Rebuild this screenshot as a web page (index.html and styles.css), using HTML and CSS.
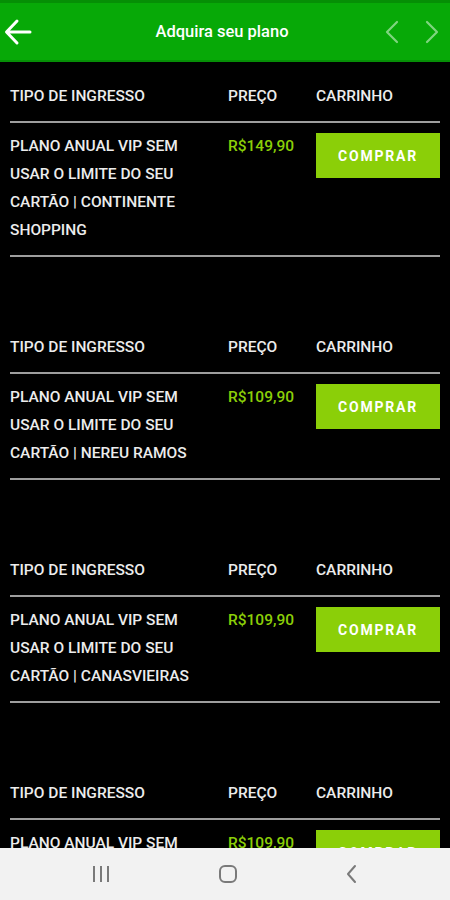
FILE: index.html
```html
<!DOCTYPE html>
<html lang="pt-BR">

<head>
    <meta charset="UTF-8">
    <meta name="viewport" content="width=device-width, initial-scale=1.0">
    <title>Adquira seu plano</title>
    <link rel="stylesheet" href="styles.css">
</head>

<body>
    <div class="app">
        <header class="app__bar">
            <button class="app__back" aria-label="Voltar">
                <svg width="28" height="28" viewBox="0 0 28 28" fill="none" stroke="#fff" stroke-width="3" stroke-linecap="round" stroke-linejoin="round">
                    <path d="M26 14H3M13 3L2.5 14L13 25"/>
                </svg>
            </button>
            <h1 class="app__title">Adquira seu plano</h1>
            <div class="app__nav">
                <svg width="16" height="24" viewBox="0 0 16 24" fill="none" stroke="#7fd57f" stroke-width="2.2" stroke-linecap="round" stroke-linejoin="round">
                    <path d="M13 2L3 12L13 22"/>
                </svg>
                <svg width="16" height="24" viewBox="0 0 16 24" fill="none" stroke="#7fd57f" stroke-width="2.2" stroke-linecap="round" stroke-linejoin="round">
                    <path d="M3 2L13 12L3 22"/>
                </svg>
            </div>
        </header>

        <main class="plans">
            <div class="plan">
                <div class="plan__head">
                    <span>TIPO DE INGRESSO</span>
                    <span>PREÇO</span>
                    <span>CARRINHO</span>
                </div>
                <div class="plan__row">
                    <span class="plan__name">PLANO ANUAL VIP SEM USAR O LIMITE DO SEU CARTÃO | CONTINENTE SHOPPING</span>
                    <span class="plan__price">R$149,90</span>
                    <button class="plan__buy">COMPRAR</button>
                </div>
            </div>

            <div class="plan">
                <div class="plan__head">
                    <span>TIPO DE INGRESSO</span>
                    <span>PREÇO</span>
                    <span>CARRINHO</span>
                </div>
                <div class="plan__row">
                    <span class="plan__name">PLANO ANUAL VIP SEM USAR O LIMITE DO SEU CARTÃO | NEREU RAMOS</span>
                    <span class="plan__price">R$109,90</span>
                    <button class="plan__buy">COMPRAR</button>
                </div>
            </div>

            <div class="plan">
                <div class="plan__head">
                    <span>TIPO DE INGRESSO</span>
                    <span>PREÇO</span>
                    <span>CARRINHO</span>
                </div>
                <div class="plan__row">
                    <span class="plan__name">PLANO ANUAL VIP SEM USAR O LIMITE DO SEU CARTÃO | CANASVIEIRAS</span>
                    <span class="plan__price">R$109,90</span>
                    <button class="plan__buy">COMPRAR</button>
                </div>
            </div>

            <div class="plan">
                <div class="plan__head">
                    <span>TIPO DE INGRESSO</span>
                    <span>PREÇO</span>
                    <span>CARRINHO</span>
                </div>
                <div class="plan__row">
                    <span class="plan__name">PLANO ANUAL VIP SEM USAR O LIMITE DO SEU CARTÃO | TRINDADE</span>
                    <span class="plan__price">R$109,90</span>
                    <button class="plan__buy">COMPRAR</button>
                </div>
            </div>
        </main>

        <nav class="sysbar">
            <svg width="20" height="18" viewBox="0 0 20 18" fill="none" stroke="#7a7a7a" stroke-width="2">
                <path d="M3 1V17M10 1V17M17 1V17"/>
            </svg>
            <svg width="20" height="20" viewBox="0 0 20 20" fill="none" stroke="#7a7a7a" stroke-width="2">
                <rect x="2" y="2" width="16" height="16" rx="5"/>
            </svg>
            <svg width="14" height="20" viewBox="0 0 14 20" fill="none" stroke="#7a7a7a" stroke-width="2" stroke-linecap="round" stroke-linejoin="round">
                <path d="M10 2L3 10L10 18"/>
            </svg>
        </nav>
    </div>
</body>

</html>
```

FILE: styles.css
```css
* {
    box-sizing: border-box;
}

body {
    margin: 0;
    background-color: #000;
    font-family: Roboto, "Liberation Sans", Arial, sans-serif;
}

.app {
    display: flex;
    flex-direction: column;
    height: 900px;
    width: 450px;
}

.app__bar {
    display: grid;
    grid-template-columns: 1fr auto 1fr;
    align-items: center;
    height: 62px;
    flex-shrink: 0;
    background-color: #07a907;
    border-top: 3px solid #058f05;
    border-bottom: 2px solid #068f06;
    padding: 0 10px 0 4px;
}

.app__back {
    display: flex;
    background: none;
    border: 0;
    padding: 0;
    cursor: pointer;
}

.app__title {
    margin: 0;
    color: #fff;
    font-size: 16.5px;
    font-weight: 500;
}

.app__nav {
    display: flex;
    justify-content: flex-end;
    gap: 24px;
}

.plans {
    flex: 1;
    overflow: hidden;
    padding: 20px 10px 0;
}

.plan {
    margin-bottom: 76px;
}

.plan__head,
.plan__row {
    display: grid;
    grid-template-columns: 218px 88px 1fr;
    border-bottom: 2px solid #9e9e9e;
    color: #ececec;
    font-size: 15.5px;
    font-weight: 500;
    line-height: 28px;
}

.plan__head {
    padding-bottom: 11px;
}

.plan__row {
    padding: 9px 0 11px;
}

.plan__name {
    padding-right: 30px;
}

.plan__price {
    color: #8bcf08;
}

.plan__buy {
    align-self: start;
    margin-top: 1px;
    height: 45px;
    background-color: #8bcf08;
    border: 0;
    color: #fff;
    font: bold 14px Roboto, "Liberation Sans", Arial, sans-serif;
    letter-spacing: 1.8px;
    cursor: pointer;
}

.sysbar {
    display: flex;
    justify-content: space-around;
    align-items: center;
    height: 52px;
    flex-shrink: 0;
    background-color: #f2f2f2;
    padding: 0 38px;
}
```
